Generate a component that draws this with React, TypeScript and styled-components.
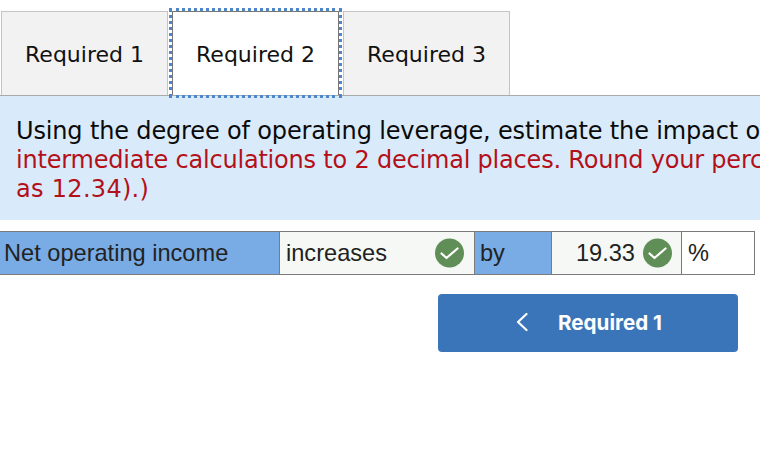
import { FC } from 'react';
import styled, { createGlobalStyle } from 'styled-components';

const tabs: { label: string; active?: boolean }[] = [
  { label: 'Required 1' },
  { label: 'Required 2', active: true },
  { label: 'Required 3' },
];

const CheckBadge: FC = () => (
  <svg width="29" height="30" viewBox="0 0 29 30" aria-hidden="true">
    <circle cx="14.5" cy="15" r="14.5" fill="#5f8f57" />
    <path d="M6.5 15.5l5 4.5 11-9.5" fill="none" stroke="#fff" strokeWidth="2.2" strokeLinecap="round" strokeLinejoin="round" />
  </svg>
);

const App: FC = () => (
  <Page>
    <GlobalStyle />
    <TabBar>
      {tabs.map((tab) => (
        <Tab key={tab.label} $active={tab.active}>
          {tab.label}
        </Tab>
      ))}
    </TabBar>
    <Question>
      <Line $spacing={-0.15}>Using the degree of operating leverage, estimate the impact on net operating income.</Line>
      <Line $red $spacing={-0.2}>intermediate calculations to 2 decimal places. Round your percentage answer</Line>
      <Line $red $spacing={0.3}>as 12.34).)</Line>
    </Question>
    <AnswerRow>
      <LabelCell $width={280} $inset={4}>Net operating income</LabelCell>
      <EntryCell $width={195}>
        <span>increases</span>
        <CheckBadge />
      </EntryCell>
      <LabelCell $width={77} $inset={5}>by</LabelCell>
      <NumberCell $width={130}>
        <span>19.33</span>
        <CheckBadge />
      </NumberCell>
      <UnitCell $width={72}>%</UnitCell>
    </AnswerRow>
    <Actions>
      <BackButton type="button">
        <svg width="14" height="20" viewBox="0 0 14 20" aria-hidden="true">
          <path d="M12.5 2L4 10l8.5 8" fill="none" stroke="#fff" strokeWidth="2.2" strokeLinecap="round" strokeLinejoin="round" />
        </svg>
        <span>Required 1</span>
      </BackButton>
    </Actions>
  </Page>
);

export default App;

const GlobalStyle = createGlobalStyle`
  html, body {
    margin: 0;
    padding: 0;
    background: #fff;
    overflow: hidden;
  }
`;

const Page = styled.div`
  width: 760px;
  height: 466px;
  overflow: hidden;
  padding-top: 11px;
  box-sizing: border-box;
`;

const TabBar = styled.div`
  display: flex;
  height: 84px;
  padding-left: 1px;
  gap: 4px;
`;

const Tab = styled.div<{ $active?: boolean }>`
  box-sizing: border-box;
  width: 167px;
  height: 84px;
  padding-top: 2px;
  display: flex;
  align-items: center;
  justify-content: center;
  font-family: 'DejaVu Sans', sans-serif;
  font-size: 22px;
  color: #111;
  background: ${(props) => (props.$active ? '#fff' : '#f2f2f2')};
  border: 1px solid #c4c4c4;
  border-bottom: none;

  ${(props) =>
    props.$active &&
    `
    outline: 3px dotted #4f86c8;
    border-color: #777;
  `}
`;

const Question = styled.div`
  box-sizing: border-box;
  height: 125px;
  padding: 21px 0 0 16px;
  border-top: 1px solid #aaa;
  background: #d9ebfa;
  font-family: 'DejaVu Sans', sans-serif;
  font-size: 24px;
  line-height: 29px;
  white-space: nowrap;
  overflow: hidden;
`;

const Line = styled.div<{ $red?: boolean; $spacing: number }>`
  color: ${(props) => (props.$red ? '#b3101a' : '#0a0a0a')};
  letter-spacing: ${(props) => props.$spacing}px;
`;

const AnswerRow = styled.div`
  display: flex;
  width: 755px;
  height: 44px;
  margin-top: 11px;
  box-sizing: border-box;
  border: solid #7b7b7b;
  border-width: 1px 1px 1px 0;
  font-family: 'Liberation Sans', Arial, sans-serif;
  font-size: 23.6px;
  color: #222;
`;

const Cell = styled.div<{ $width: number }>`
  box-sizing: border-box;
  width: ${(props) => props.$width}px;
  display: flex;
  align-items: center;
  padding: 0 5px;
  border-right: 1px solid #7b7b7b;
`;

const LabelCell = styled(Cell)<{ $inset: number }>`
  padding-left: ${(props) => props.$inset}px;
  background: #79ace5;
`;

const EntryCell = styled(Cell)`
  justify-content: space-between;
  padding: 0 10px 0 6px;
  background: #f6f8f5;
`;

const NumberCell = styled(Cell)`
  justify-content: flex-end;
  gap: 8px;
  padding-right: 9px;
  background: #f6f8f5;
`;

const UnitCell = styled(Cell)`
  padding-left: 6px;
  background: #fff;
  border-right: none;
`;

const Actions = styled.div`
  display: flex;
  justify-content: flex-end;
  width: 738px;
  margin-top: 19px;
`;

const BackButton = styled.button`
  box-sizing: border-box;
  width: 300px;
  height: 58px;
  display: flex;
  align-items: center;
  justify-content: center;
  gap: 30px;
  padding: 0 0 2px;
  border: none;
  border-radius: 4px;
  background: #3a75ba;
  color: #fff;
  font-family: Inter, sans-serif;
  font-size: 20.6px;
  font-weight: 700;
`;
